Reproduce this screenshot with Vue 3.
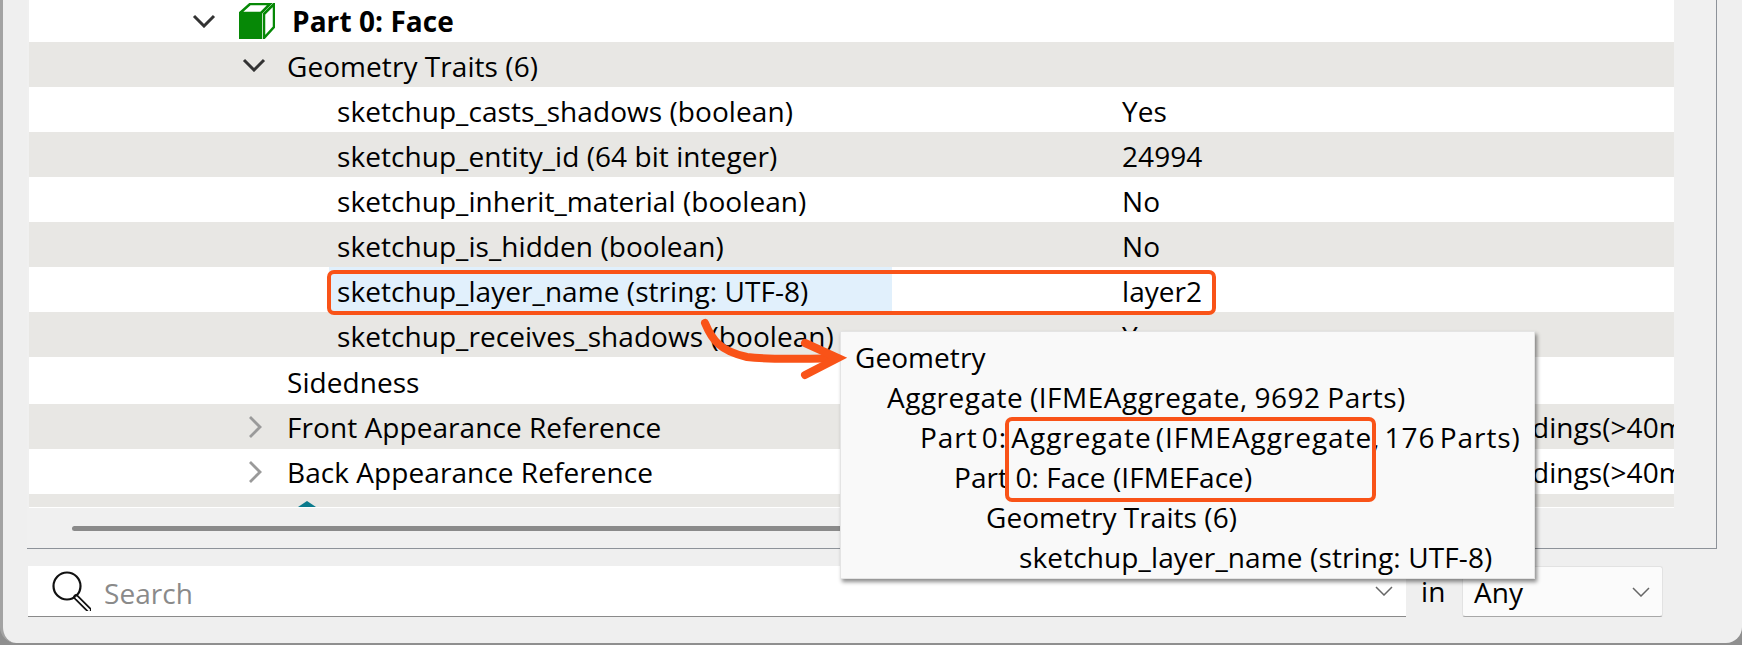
<script setup>
const traits = [
  { name: 'sketchup_casts_shadows (boolean)', value: 'Yes' },
  { name: 'sketchup_entity_id (64 bit integer)', value: '24994', alt: true },
  { name: 'sketchup_inherit_material (boolean)', value: 'No' },
  { name: 'sketchup_is_hidden (boolean)', value: 'No', alt: true },
  { name: 'sketchup_layer_name (string: UTF-8)', value: 'layer2', picked: true },
  { name: 'sketchup_receives_shadows (boolean)', value: 'Yes', alt: true },
];

const refs = [
  { name: 'Front Appearance Reference', alt: true },
  { name: 'Back Appearance Reference', alt: false },
];

const pathLines = [
  { text: 'Geometry', depth: 0 },
  { text: 'Aggregate (IFMEAggregate, 9692 Parts)', depth: 1 },
  { text: 'Part 0: Aggregate (IFMEAggregate, 176 Parts)', depth: 2 },
  { text: 'Part 0: Face (IFMEFace)', depth: 3 },
  { text: 'Geometry Traits (6)', depth: 4 },
  { text: 'sketchup_layer_name (string: UTF-8)', depth: 5 },
];
</script>

<template>
  <div class="window">
    <div class="frame">
      <div class="tree">
        <div class="row part-row">
          <svg class="chev-part" width="24" height="14" viewBox="0 0 24 14"><path d="M2 2l10 10L22 2" /></svg>
          <svg class="cube" width="36" height="36" viewBox="0 0 36 36">
            <path d="M1 10L11 1h20L22 10z" fill="#fff" stroke="#068806" stroke-width="2.500" />
            <path d="M25 11L35 1v23L25 35z" fill="#fff" stroke="#068806" stroke-width="2.500" />
            <rect y="11" width="23" height="25" fill="#068806" />
          </svg>
          <span class="part-title">Part 0: Face</span>
        </div>

        <div class="row alt group-row">
          <svg class="chev-group" width="24" height="14" viewBox="0 0 24 14"><path d="M2 2l10 10L22 2" /></svg>
          <span>Geometry Traits (6)</span>
        </div>

        <div v-for="t in traits" :key="t.name" class="row trait" :class="{ alt: t.alt, boxed: t.picked }">
          <div class="trait-name" :class="{ picked: t.picked }">{{ t.name }}</div>
          <div class="trait-value">{{ t.value }}</div>
          <div v-if="t.picked" class="row-box"></div>
        </div>

        <div class="row plain-row">Sidedness</div>

        <div v-for="r in refs" :key="r.name" class="row ref-row" :class="{ alt: r.alt }">
          <svg class="chev-ref" width="14" height="24" viewBox="0 0 14 24"><path d="M2 2l10 10L2 22" /></svg>
          <span class="ref-name">{{ r.name }}</span>
          <span class="ref-value">dings(&gt;40m)</span>
        </div>

        <div class="row alt last-row">
          <svg class="teal" width="18" height="6" viewBox="0 0 18 6"><path d="M9 0l9 6H0z" /></svg>
        </div>
      </div>

      <div class="scroll-area">
        <div class="scroll-thumb"></div>
      </div>
    </div>

    <div class="search-bar">
      <div class="search-box">
        <svg class="glass" width="40" height="40" viewBox="0 0 40 40">
          <circle cx="16" cy="15" r="13.500" fill="none" stroke="#111" stroke-width="2.200" />
          <path d="M25 26l13 13" stroke="#111" stroke-width="5.500" stroke-linecap="round" />
          <path d="M25.500 26.500l12.500 12.500" stroke="#fff" stroke-width="2" stroke-linecap="round" />
        </svg>
        <span class="search-text">Search</span>
        <svg class="chev-small" width="18" height="10" viewBox="0 0 18 10"><path d="M1 1l8 8 8-8" /></svg>
      </div>
      <span class="in-label">in</span>
      <div class="any-box">
        <span>Any</span>
        <svg class="chev-small" width="18" height="10" viewBox="0 0 18 10"><path d="M1 1l8 8 8-8" /></svg>
      </div>
    </div>

    <div class="popup">
      <div
        v-for="line in pathLines"
        :key="line.text"
        class="path-line"
        :class="'depth-' + line.depth"
      >{{ line.text }}</div>
      <div class="popup-box"></div>
    </div>

    <svg class="arrow" width="150" height="70" viewBox="0 0 150 70">
      <path d="M5 5C12 22 20 33 47 39C70 42 105 41 135 40" fill="none" stroke="#f95318" stroke-width="8" stroke-linecap="round" />
      <path d="M105 25l33 15-33 17" fill="none" stroke="#f95318" stroke-width="8" stroke-linecap="round" />
    </svg>
  </div>
</template>

<style>
html,
body {
  margin: 0;
  background: #8f8f8f;
}
</style>

<style scoped>
.window {
  position: relative;
  box-sizing: border-box;
  width: 1742px;
  height: 643px;
  overflow: hidden;
  background: #efefef;
  border-left: 3px solid #a3a3a3;
  border-bottom-left-radius: 16px;
  border-bottom-right-radius: 16px;
  font-family: "Open Sans", "Noto Sans", sans-serif;
  font-size: 28px;
  letter-spacing: 0.06px;
  color: #000;
}

.frame {
  box-sizing: border-box;
  width: 1690px;
  height: 549px;
  margin-left: 24px;
  padding-left: 2px;
  border-right: 1px solid #8d9299;
  border-bottom: 1px solid #8d9299;
  background: #f0f0f0;
}

.tree {
  width: 1645px;
  background: #fff;
  border-bottom: 1px solid #fff;
}

.row {
  position: relative;
  display: flex;
  align-items: center;
  height: 45px;
  white-space: nowrap;
  overflow: hidden;
}

.alt {
  background: #e8e7e4;
}

.part-row {
  height: 42px;
}

.chev-part {
  margin-left: 163px;
}

.chev-part path,
.chev-group path {
  fill: none;
  stroke: #333;
  stroke-width: 3;
}

.cube {
  margin-left: 23px;
}

.part-title {
  margin-left: 17px;
  font-weight: 700;
}

.chev-group {
  margin-left: 213px;
}

.group-row span {
  margin-left: 21px;
}

.group-row span,
.trait-name,
.trait-value,
.plain-row {
  padding-top: 2px;
}

.trait {
  display: grid;
  grid-template-columns: 300px 563px 1fr;
}

.trait-name {
  grid-column: 2;
  display: flex;
  align-items: center;
  height: 45px;
  padding-left: 8px;
  box-sizing: border-box;
}

.trait-value {
  grid-column: 3;
  padding-left: 230px;
}

.picked {
  background: #e1f0fc;
}

.boxed {
  overflow: visible;
  z-index: 2;
}

.row-box {
  position: absolute;
  left: 298px;
  top: 3px;
  width: 889px;
  height: 45px;
  box-sizing: border-box;
  border: 4px solid #f95318;
  border-radius: 7px;
}

.plain-row {
  padding-left: 258px;
}

.chev-ref {
  margin-left: 219px;
  flex: none;
}

.chev-ref path {
  fill: none;
  stroke: #9a9a9a;
  stroke-width: 2.800;
}

.ref-name {
  margin-left: 25px;
  width: 1245px;
  flex: none;
}

.ref-value {
  flex: none;
}

.last-row {
  height: 13px;
  align-items: flex-end;
}

.teal {
  margin-left: 269px;
}

.teal path {
  fill: #0a7a8c;
}

.scroll-area {
  height: 42px;
  padding-top: 18px;
  box-sizing: border-box;
}

.scroll-thumb {
  width: 900px;
  height: 5px;
  margin-left: 43px;
  border-radius: 3px;
  background: #8a8a8a;
}

.search-bar {
  display: flex;
  align-items: flex-start;
  margin-top: 17px;
  margin-left: 25px;
}

.search-box {
  box-sizing: border-box;
  display: flex;
  align-items: center;
  width: 1378px;
  height: 51px;
  background: #fff;
  border-bottom: 1px solid #8a8a8a;
}

.glass {
  margin-left: 23px;
  flex: none;
}

.search-text {
  margin-left: 13px;
  padding-top: 3px;
  color: #8a8a8a;
}

.chev-small {
  flex: none;
  margin-left: auto;
  margin-right: 13px;
}

.chev-small path {
  fill: none;
  stroke: #666;
  stroke-width: 1.500;
}

.in-label {
  margin-left: 15px;
  width: 41px;
  line-height: 51px;
}

.any-box {
  box-sizing: border-box;
  display: flex;
  align-items: center;
  width: 201px;
  height: 51px;
  padding-left: 11px;
  background: #fbfbfb;
  border: 1px solid #e2e2e2;
  border-bottom-color: #a8a8a8;
  border-radius: 3px;
}

.any-box .chev-small {
  margin-right: 12px;
}

.popup {
  position: absolute;
  left: 837px;
  top: 331px;
  z-index: 3;
  box-sizing: border-box;
  width: 695px;
  height: 248px;
  padding: 5px 0 0 14px;
  background: #f9f9f9;
  border: 1px solid #e4e4e4;
  box-shadow: 2px 3px 4px rgba(0, 0, 0, 0.45);
  white-space: nowrap;
}

.path-line {
  height: 40px;
  line-height: 40px;
}

.depth-1 { padding-left: 32px; letter-spacing: 0.5px; word-spacing: -1px; }
.depth-2 { padding-left: 65px; letter-spacing: 0.95px; word-spacing: -4px; }
.depth-3 { padding-left: 99px; }
.depth-4 { padding-left: 131px; }
.depth-5 { padding-left: 164px; letter-spacing: 0.12px; }

.popup-box {
  position: absolute;
  left: 164px;
  top: 85px;
  width: 371px;
  height: 85px;
  box-sizing: border-box;
  border: 4px solid #f95318;
  border-radius: 7px;
}

.arrow {
  position: absolute;
  left: 697px;
  top: 318px;
  z-index: 4;
}
</style>
